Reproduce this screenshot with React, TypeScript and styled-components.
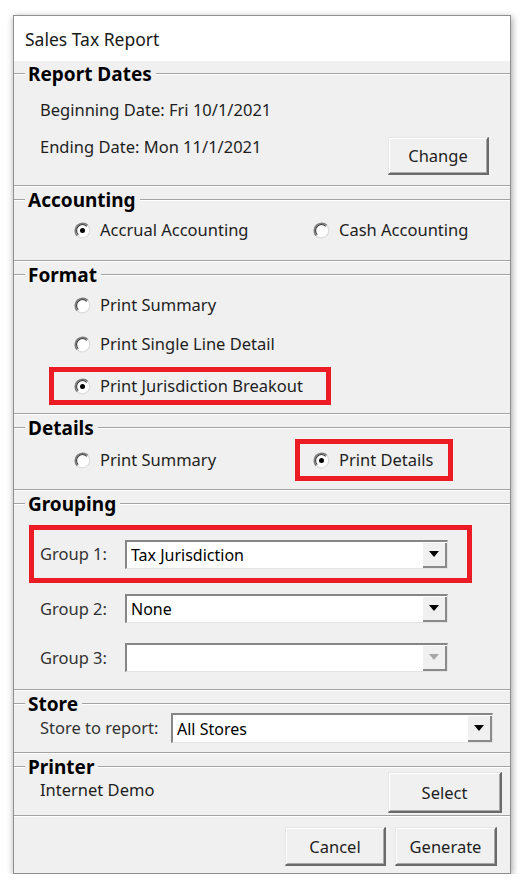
import React from "react"
import styled, { createGlobalStyle } from "styled-components"

const GlobalStyle = createGlobalStyle`
  html, body {
    margin: 0;
    padding: 0;
    background: #ffffff;
  }
  body {
    font-family: "Noto Sans", "Open Sans", sans-serif;
    color: #1e1e1e;
  }
`

const Page = styled.div`
  padding: 15px 0 0 13px;
`

const Window = styled.div`
  width: 498px;
  box-sizing: border-box;
  border: 1px solid #8f8f8f;
  background: #f0f0f0;
  box-shadow: 1px 2px 7px rgba(0, 0, 0, 0.38);
  display: flex;
  flex-direction: column;
`

const TitleBar = styled.div`
  height: 45px;
  background: #ffffff;
  display: flex;
  align-items: center;
  padding-left: 11px;
  font-size: 17.5px;
  color: #1a1a1a;
`

const Frame = styled.section`
  padding-bottom: 2px;
  box-shadow: inset 0 -1px 0 #ffffff, inset 0 -2px 0 #a3a3a3;
`

const Head = styled.div`
  display: flex;
  align-items: center;
  height: 26px;
`

const Rule = styled.div<{ $w?: number }>`
  height: 0;
  border-top: 1px solid #a3a3a3;
  border-bottom: 1px solid #ffffff;
  ${(p) => (p.$w ? `width: ${p.$w}px;` : `flex: 1;`)}
`

const Legend = styled.span`
  font-weight: 700;
  font-size: 19px;
  line-height: 26px;
  padding: 0 4px 0 3px;
  color: #000000;
`

const Body = styled.div<{ $mt?: number; $pt?: number; $pb?: number }>`
  display: flex;
  flex-direction: column;
  margin-top: ${(p) => p.$mt ?? 0}px;
  padding-top: ${(p) => p.$pt ?? 0}px;
  padding-bottom: ${(p) => p.$pb ?? 0}px;
`

const Row = styled.div<{ $mt?: number; $ml?: number; $mr?: number; $top?: boolean }>`
  display: flex;
  align-items: ${(p) => (p.$top ? "flex-start" : "center")};
  justify-content: space-between;
  margin-top: ${(p) => p.$mt ?? 0}px;
  margin-left: ${(p) => p.$ml ?? 0}px;
  margin-right: ${(p) => p.$mr ?? 0}px;
`

const Line = styled.div<{ $mt?: number; $ml?: number }>`
  display: flex;
  align-items: center;
  margin-top: ${(p) => p.$mt ?? 0}px;
  margin-left: ${(p) => p.$ml ?? 0}px;
`

const Text = styled.div<{ $mt?: number }>`
  font-size: 16.5px;
  line-height: 22px;
  color: #1e1e1e;
  white-space: nowrap;
  margin-top: ${(p) => p.$mt ?? 0}px;
`

const Option = styled.label<{ $w?: number }>`
  display: flex;
  align-items: center;
  gap: 9px;
  height: 22px;
  ${(p) => (p.$w ? `width: ${p.$w}px;` : "")}
`

const Highlight = styled.div<{ $w: number; $h: number; $ml?: number; $mt?: number; $pl: number }>`
  box-sizing: border-box;
  width: ${(p) => p.$w}px;
  height: ${(p) => p.$h}px;
  margin-left: ${(p) => p.$ml ?? 0}px;
  margin-top: ${(p) => p.$mt ?? 0}px;
  padding-left: ${(p) => p.$pl}px;
  border: 5px solid #ec1c24;
  display: flex;
  align-items: center;
`

const Button = styled.div<{ $w: number; $h: number; $mt?: number }>`
  box-sizing: border-box;
  width: ${(p) => p.$w}px;
  height: ${(p) => p.$h}px;
  margin-top: ${(p) => p.$mt ?? 0}px;
  background: #f0f0f0;
  border-style: solid;
  border-width: 1px 2px 2px 1px;
  border-color: #e6e6e6 #6a6a6a #6a6a6a #e6e6e6;
  box-shadow: inset 1px 1px 0 #ffffff, inset -1px -1px 0 #a8a8a8;
  display: flex;
  align-items: center;
  justify-content: center;
  font-size: 16.5px;
  color: #1e1e1e;
`

const FieldLabel = styled.div<{ $w: number }>`
  width: ${(p) => p.$w}px;
  font-size: 16.5px;
  line-height: 22px;
  color: #333333;
  white-space: nowrap;
`

const SelectBox = styled.div<{ $w: number; $h: number }>`
  box-sizing: border-box;
  width: ${(p) => p.$w}px;
  height: ${(p) => p.$h}px;
  display: flex;
  background: #ffffff;
  border-style: solid;
  border-width: 2px 1px 1px 2px;
  border-color: #868686 #e3e3e3 #e3e3e3 #868686;
`

const SelectValue = styled.div`
  flex: 1;
  display: flex;
  align-items: center;
  padding-left: 4px;
  font-size: 16px;
  color: #000000;
`

const DropButton = styled.div`
  width: 25px;
  background: #f0f0f0;
  box-shadow: inset 1px 1px 0 #ffffff, inset -2px -2px 0 #8a8a8a;
  display: flex;
  align-items: center;
  justify-content: center;
`

const Arrow = styled.div<{ $off?: boolean }>`
  width: 0;
  height: 0;
  margin: 0 2px 2px 0;
  border-left: 5px solid transparent;
  border-right: 5px solid transparent;
  border-top: 6px solid ${(p) => (p.$off ? "#a6a6a6" : "#000000")};
`

const Footer = styled.div`
  display: flex;
  justify-content: flex-end;
  gap: 9px;
  padding: 10px 13px 7px 0;
`

function Radio({ checked }: { checked?: boolean }) {
  return (
    <svg width="17" height="17" viewBox="0 0 17 17">
      <circle cx="8.5" cy="8.5" r="7.5" fill="#ffffff" />
      <path d="M13.8 3.2 A7.5 7.5 0 0 1 3.2 13.8" fill="none" stroke="#dcdcdc" strokeWidth="1.3" />
      <path d="M3.2 13.8 A7.5 7.5 0 0 1 13.8 3.2" fill="none" stroke="#7c7c7c" strokeWidth="1.5" />
      <path d="M4.3 12.7 A5.9 5.9 0 0 1 12.7 4.3" fill="none" stroke="#333333" strokeWidth="1.1" />
      {checked && <circle cx="8.5" cy="8.5" r="2.5" fill="#000000" />}
    </svg>
  )
}

function Select({ w, h, value, off }: { w: number; h: number; value?: string; off?: boolean }) {
  return (
    <SelectBox $w={w} $h={h}>
      <SelectValue>{value}</SelectValue>
      <DropButton>
        <Arrow $off={off} />
      </DropButton>
    </SelectBox>
  )
}

function FrameHead({ title }: { title: string }) {
  return (
    <Head>
      <Rule $w={11} />
      <Legend>{title}</Legend>
      <Rule />
    </Head>
  )
}

export default function App() {
  return (
    <Page>
      <GlobalStyle />
      <Window>
        <TitleBar>Sales Tax Report</TitleBar>

        <Frame>
          <FrameHead title="Report Dates" />
          <Body $pt={12} $pb={10}>
            <Line $ml={26}>
              <Text>Beginning Date: Fri 10/1/2021</Text>
            </Line>
            <Row $mt={15} $ml={26} $mr={21} $top>
              <Text>Ending Date: Mon 11/1/2021</Text>
              <Button $w={101} $h={38} $mt={1}>
                Change
              </Button>
            </Row>
          </Body>
        </Frame>

        <Frame>
          <FrameHead title="Accounting" />
          <Body $pt={6} $pb={19}>
            <Line $ml={60}>
              <Option $w={239}>
                <Radio checked />
                <Text>Accrual Accounting</Text>
              </Option>
              <Option>
                <Radio />
                <Text>Cash Accounting</Text>
              </Option>
            </Line>
          </Body>
        </Frame>

        <Frame>
          <FrameHead title="Format" />
          <Body $pt={6} $pb={8}>
            <Line $ml={60}>
              <Option>
                <Radio />
                <Text>Print Summary</Text>
              </Option>
            </Line>
            <Line $ml={60} $mt={17}>
              <Option>
                <Radio />
                <Text>Print Single Line Detail</Text>
              </Option>
            </Line>
            <Highlight $w={282} $h={38} $ml={35} $mt={12} $pl={20}>
              <Option>
                <Radio checked />
                <Text>Print Jurisdiction Breakout</Text>
              </Option>
            </Highlight>
          </Body>
        </Frame>

        <Frame>
          <FrameHead title="Details" />
          <Body $mt={-2} $pb={8}>
            <Line $ml={60}>
              <Option $w={221}>
                <Radio />
                <Text>Print Summary</Text>
              </Option>
              <Highlight $w={158} $h={42} $pl={13}>
                <Option>
                  <Radio checked />
                  <Text>Print Details</Text>
                </Option>
              </Highlight>
            </Line>
          </Body>
        </Frame>

        <Frame>
          <FrameHead title="Grouping" />
          <Body $pt={8} $pb={17}>
            <Highlight $w={443} $h={58} $ml={15} $pl={6}>
              <FieldLabel $w={85}>Group 1:</FieldLabel>
              <Select w={323} h={29} value="Tax Jurisdiction" />
            </Highlight>
            <Line $ml={26} $mt={11}>
              <FieldLabel $w={85}>Group 2:</FieldLabel>
              <Select w={323} h={29} value="None" />
            </Line>
            <Line $ml={26} $mt={20}>
              <FieldLabel $w={85}>Group 3:</FieldLabel>
              <Select w={323} h={29} off />
            </Line>
          </Body>
        </Frame>

        <Frame>
          <FrameHead title="Store" />
          <Body $mt={-4} $pb={9}>
            <Line $ml={26}>
              <FieldLabel $w={131}>Store to report:</FieldLabel>
              <Select w={322} h={30} value="All Stores" />
            </Line>
          </Body>
        </Frame>

        <Frame>
          <FrameHead title="Printer" />
          <Body $mt={-8} $pb={2}>
            <Row $ml={26} $mr={8} $top>
              <Text $mt={7}>Internet Demo</Text>
              <Button $w={114} $h={41}>
                Select
              </Button>
            </Row>
          </Body>
        </Frame>

        <Footer>
          <Button $w={101} $h={39}>
            Cancel
          </Button>
          <Button $w={102} $h={39}>
            Generate
          </Button>
        </Footer>
      </Window>
    </Page>
  )
}
